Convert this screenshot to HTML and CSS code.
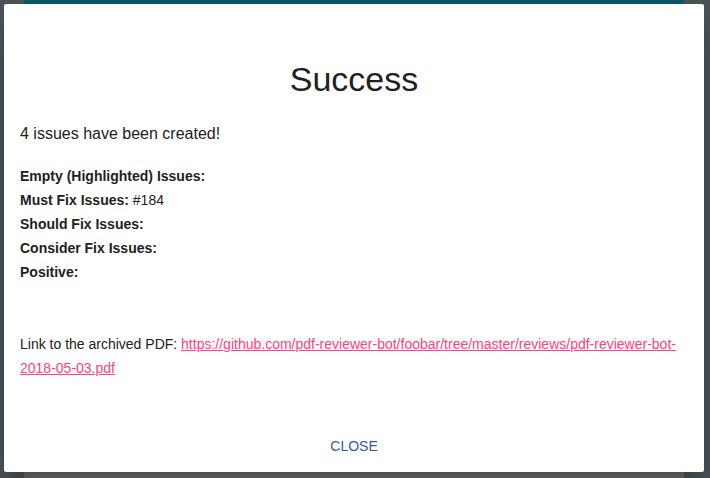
FILE: index.html
```html
<!DOCTYPE html>
<html>
<head>
<meta charset="utf-8">
<link rel="stylesheet" href="styles.css">
</head>
<body>
<div class="page">
  <div class="appbar"></div>
  <div class="spacer"></div>
  <div class="footer"></div>
</div>
<div class="dialog">
  <h2 class="title">Success</h2>
  <div class="content">
    <p class="lead">4 issues have been created!</p>
    <div class="issues">
      <div class="row"><strong>Empty (Highlighted) Issues:</strong></div>
      <div class="row"><strong>Must Fix Issues:</strong> #184</div>
      <div class="row"><strong>Should Fix Issues:</strong></div>
      <div class="row"><strong>Consider Fix Issues:</strong></div>
      <div class="row"><strong>Positive:</strong></div>
    </div>
    <p class="link-line">Link to the archived PDF: <a href="#">https://github.com/pdf-reviewer-bot/foobar/tree/master/reviews/pdf-reviewer-bot-2018-05-03.pdf</a></p>
  </div>
  <div class="actions">
    <button class="close">Close</button>
  </div>
</div>
</body>
</html>
```
FILE: styles.css
```css
html, body {
  margin: 0;
  padding: 0;
  height: 478px;
  overflow: hidden;
}
body {
  background: #4a5358;
  font-family: "Liberation Sans", Arial, sans-serif;
  color: #212121;
}
.page {
  margin: 0 26px 0 24px;
  height: 478px;
  display: flex;
  flex-direction: column;
}
.appbar {
  height: 64px;
  background: #0a5966;
}
.spacer {
  flex: 1;
}
.footer {
  height: 6px;
  background: #6b6b6b;
}
.dialog {
  position: absolute;
  top: 4px;
  left: 4px;
  width: 700px;
  height: 468px;
  background: #ffffff;
  border-radius: 2px;
  box-shadow: 0 11px 15px -7px rgba(0,0,0,0.2), 0 24px 38px 3px rgba(0,0,0,0.14);
  display: flex;
  flex-direction: column;
  box-sizing: border-box;
  padding-top: 55px;
}
.title {
  margin: 0;
  font-size: 34px;
  font-weight: normal;
  line-height: 40px;
  text-align: center;
  color: #212121;
}
.content {
  padding: 0 16px;
}
.lead {
  margin: 23px 0 0;
  font-size: 16px;
  line-height: 24px;
}
.issues {
  margin-top: 18px;
  font-size: 14px;
  line-height: 24px;
}
.row strong {
  font-weight: bold;
}
.link-line {
  margin: 48px 0 0;
  font-size: 14px;
  line-height: 24px;
}
.link-line a {
  color: #ff4081;
  text-decoration: underline;
}
.actions {
  margin-top: auto;
  padding: 8px;
  display: flex;
  justify-content: center;
}
.close {
  font-family: "Liberation Sans", Arial, sans-serif;
  font-size: 14px;
  line-height: 36px;
  height: 36px;
  padding: 0 16px;
  border: none;
  background: transparent;
  color: #3f51b5;
  text-transform: uppercase;
  cursor: pointer;
}
```
